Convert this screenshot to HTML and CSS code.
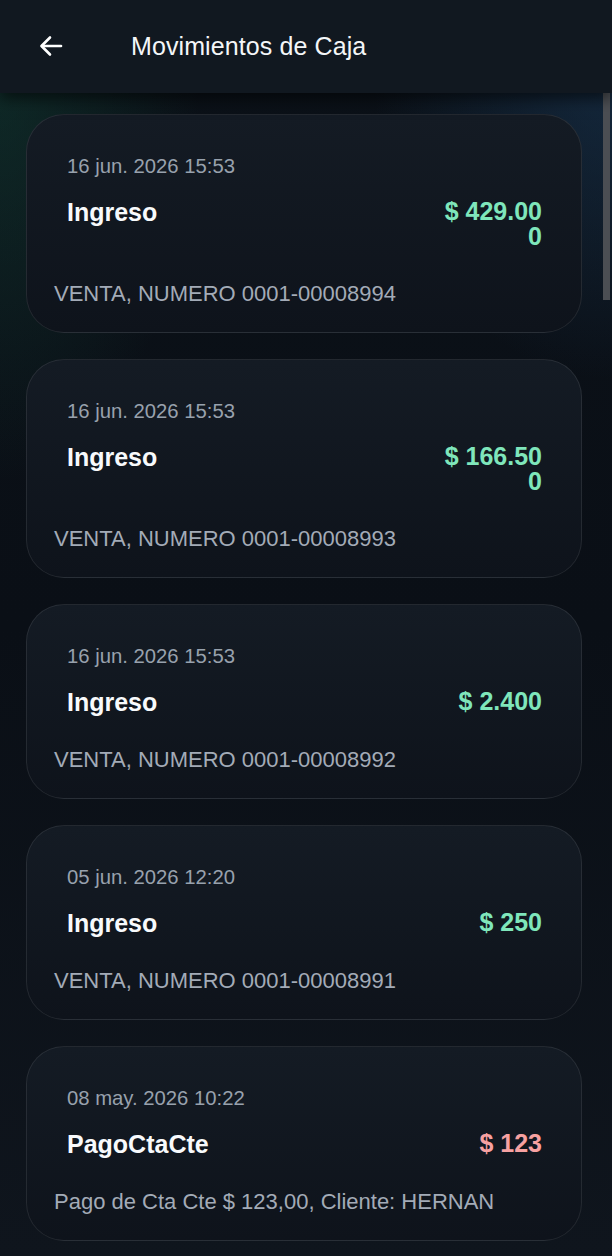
FILE: index.html
```html
<!DOCTYPE html>
<html lang="es">
<head>
<meta charset="utf-8">
<title>Movimientos de Caja</title>
<link rel="stylesheet" href="styles.css">
</head>
<body>
<div class="app">
  <header class="topbar">
    <button class="back" aria-label="Volver">
      <svg width="26" height="26" viewBox="0 0 26 26" fill="none" stroke="#ffffff" stroke-width="2.6" stroke-linecap="round" stroke-linejoin="round"><path d="M23 13H4"/><path d="M12 4.5L3.5 13L12 21.5"/></svg>
    </button>
    <h1 class="title">Movimientos de Caja</h1>
  </header>
  <main class="list">
    <div class="thumb"></div>
    <article class="card">
      <div class="head">
        <div class="date">16 jun. 2026 15:53</div>
        <div class="row">
          <div class="kind">Ingreso</div>
          <div class="amount in">$ 429.000</div>
        </div>
      </div>
      <div class="desc">VENTA, NUMERO 0001-00008994</div>
    </article>
    <article class="card">
      <div class="head">
        <div class="date">16 jun. 2026 15:53</div>
        <div class="row">
          <div class="kind">Ingreso</div>
          <div class="amount in">$ 166.500</div>
        </div>
      </div>
      <div class="desc">VENTA, NUMERO 0001-00008993</div>
    </article>
    <article class="card">
      <div class="head">
        <div class="date">16 jun. 2026 15:53</div>
        <div class="row">
          <div class="kind">Ingreso</div>
          <div class="amount in">$ 2.400</div>
        </div>
      </div>
      <div class="desc">VENTA, NUMERO 0001-00008992</div>
    </article>
    <article class="card">
      <div class="head">
        <div class="date">05 jun. 2026 12:20</div>
        <div class="row">
          <div class="kind">Ingreso</div>
          <div class="amount in">$ 250</div>
        </div>
      </div>
      <div class="desc">VENTA, NUMERO 0001-00008991</div>
    </article>
    <article class="card">
      <div class="head">
        <div class="date">08 may. 2026 10:22</div>
        <div class="row">
          <div class="kind">PagoCtaCte</div>
          <div class="amount out">$ 123</div>
        </div>
      </div>
      <div class="desc">Pago de Cta Cte $ 123,00, Cliente: HERNAN</div>
    </article>
  </main>
</div>
</body>
</html>
```

FILE: styles.css
```css
* { box-sizing: border-box; }
html, body { margin: 0; padding: 0; }
body {
  background: #0b1118;
  font-family: "Liberation Sans", Arial, sans-serif;
  color: #fff;
}
.app {
  width: 612px;
  height: 1256px;
  display: flex;
  flex-direction: column;
  overflow: hidden;
  background:
    radial-gradient(ellipse 200px 400px at 0px 80px, rgba(20, 75, 60, 0.42), rgba(20, 75, 60, 0) 100%),
    radial-gradient(ellipse 240px 320px at 612px 60px, rgba(30, 65, 100, 0.5), rgba(30, 65, 100, 0) 100%),
    linear-gradient(180deg, #0b1118 0%, #0a0f16 50%, #0f151d 100%);
}
.topbar {
  height: 93px;
  flex: none;
  display: flex;
  align-items: center;
  background: #111820;
  box-shadow: 0 6px 14px rgba(0, 0, 0, 0.55);
  position: relative;
  z-index: 2;
}
.back {
  margin-left: 38px;
  width: 26px;
  height: 26px;
  padding: 0;
  border: 0;
  background: none;
  display: flex;
  margin-top: -1px;
}
.title {
  margin: 0 0 0 67px;
  font-size: 25px;
  font-weight: 400;
  color: #f4f6f8;
  letter-spacing: 0.1px;
}
.list {
  flex: 1;
  position: relative;
  padding: 21px 30px 0 26px;
  display: flex;
  flex-direction: column;
  gap: 26px;
}
.thumb {
  position: absolute;
  right: 2px;
  top: 0;
  width: 7px;
  height: 207px;
  background: #4b4e53;
}
.card {
  flex: none;
  border: 1px solid rgba(255, 255, 255, 0.09);
  border-radius: 38px;
  background: linear-gradient(180deg, #141b24 0%, #0e131b 100%);
  padding: 39px 27px 25px 27px;
}
.head {
  padding: 0 12px 0 13px;
}
.date {
  font-size: 20.3px;
  line-height: 24px;
  color: #98a1ad;
}
.row {
  margin-top: 21px;
  display: flex;
  justify-content: space-between;
  align-items: flex-start;
}
.kind {
  font-size: 25px;
  line-height: 26px;
  font-weight: 700;
  color: #f8fafc;
}
.amount {
  width: 104px;
  text-align: right;
  font-size: 25px;
  line-height: 25px;
  font-weight: 700;
  word-break: break-all;
}
.amount.in { color: #7fe6bb; }
.amount.out { color: #f7a1a1; }
.desc {
  margin-top: 32px;
  font-size: 22px;
  line-height: 26px;
  color: #a3abb7;
}
```
